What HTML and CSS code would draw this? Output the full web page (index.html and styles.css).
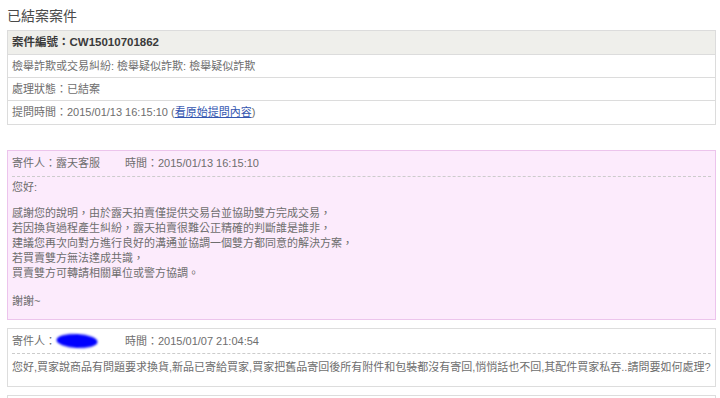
FILE: index.html
```html
<!DOCTYPE html>
<html lang="zh-Hant">
<head>
<meta charset="utf-8">
<title>已結案案件</title>
<link rel="stylesheet" href="styles.css">
</head>
<body>
<div class="page">
  <h2 class="title">已結案案件</h2>
  <div class="case">
    <div class="row head">案件編號：CW15010701862</div>
    <div class="row r1">檢舉詐欺或交易糾紛: 檢舉疑似詐欺: 檢舉疑似詐欺</div>
    <div class="row r2">處理狀態：已結案</div>
    <div class="row r3">提問時間：2015/01/13 16:15:10 (<a class="link" href="#">看原始提問內容</a>)</div>
  </div>

  <div class="msg pink">
    <div class="msg-head"><span class="sender">寄件人：露天客服</span><span>時間：2015/01/13 16:15:10</span></div>
    <div class="msg-body">
      <p>您好:</p>
      <p>感謝您的說明，由於露天拍賣僅提供交易台並協助雙方完成交易，<br>若因換貨過程產生糾紛，露天拍賣很難公正精確的判斷誰是誰非，<br>建議您再次向對方進行良好的溝通並協調一個雙方都同意的解決方案，<br>若買賣雙方無法達成共識，<br>買賣雙方可轉請相關單位或警方協調。</p>
      <p>謝謝~</p>
    </div>
  </div>

  <div class="msg plain">
    <div class="msg-head"><span class="sender">寄件人：<svg class="blob" width="48" height="20" viewBox="0 0 48 20"><defs><filter id="bl" x="-20%" y="-40%" width="140%" height="180%"><feGaussianBlur stdDeviation="1.2"/></filter></defs><ellipse cx="24" cy="10" rx="20.5" ry="7" fill="#0000ff" filter="url(#bl)" transform="rotate(3 24 10)"/></svg></span><span>時間：2015/01/07 21:04:54</span></div>
    <div class="msg-body one">
      <p>您好,買家說商品有問題要求換貨,新品已寄給買家,買家把舊品寄回後所有附件和包裝都沒有寄回,悄悄話也不回,其配件買家私吞..請問要如何處理?</p>
    </div>
  </div>

  <div class="msg plain next"></div>
</div>
</body>
</html>
```

FILE: styles.css
```css
html, body {
  margin: 0;
  padding: 0;
  background: #ffffff;
}
body {
  font-family: "Liberation Sans", "Noto Sans CJK TC", sans-serif;
  font-size: 11px;
  color: #6e6e6e;
}
.page {
  width: 709px;
  margin-left: 7px;
  padding-top: 7px;
}
.title {
  margin: 0 0 5px 0;
  font-size: 14px;
  line-height: 18px;
  font-weight: normal;
  color: #4a4a4a;
}
.case {
  border: 1px solid #dcdcdc;
  border-bottom: none;
}
.row {
  border-bottom: 1px solid #dcdcdc;
  padding: 0 4px;
  height: 22px;
  line-height: 22px;
  white-space: nowrap;
}
.row.head {
  height: 23px;
  line-height: 23px;
  background: #efefeb;
  font-weight: bold;
  font-size: 11.5px;
  color: #3a3a3a;
}
.row.r3 {
  height: 23px;
  line-height: 23px;
}
.link {
  color: #3456b0;
  text-decoration: underline;
}
.msg {
  border: 1px solid #dddddd;
  padding: 0 4px;
}
.msg.pink {
  margin-top: 25px;
  background: #fcebfc;
  border-color: #ecc4ec;
}
.msg.plain {
  margin-top: 8px;
  background: #ffffff;
}
.msg-head {
  height: 25px;
  line-height: 25px;
  border-bottom: 1px dashed #cccccc;
  display: flex;
  align-items: center;
  white-space: nowrap;
}
.plain .msg-head {
  height: 24px;
  line-height: 24px;
}
.sender {
  display: inline-flex;
  align-items: center;
  width: 113px;
}
.blob {
  display: block;
  margin-left: -3px;
}
.msg-body {
  padding: 3px 0 10px 0;
  line-height: 15px;
}
.msg-body p {
  margin: 0 0 11px 0;
}
.msg-body p:last-child {
  margin-bottom: 0;
}
.msg-body p:nth-child(2) {
  margin-bottom: 13px;
}
.msg-body.one {
  padding: 6px 0 11px 0;
  white-space: nowrap;
}
.msg.next {
  height: 20px;
}
```
